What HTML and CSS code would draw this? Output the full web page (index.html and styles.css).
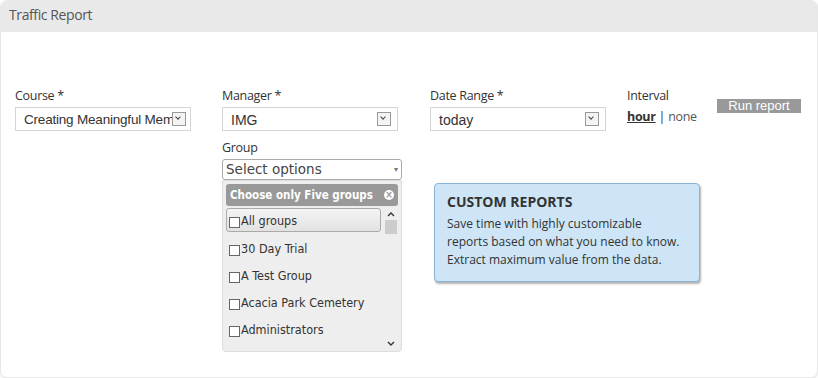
FILE: index.html
```html
<!DOCTYPE html>
<html lang="en">
<head>
    <meta charset="UTF-8">
    <title>Traffic Report</title>
    <link rel="stylesheet" href="styles.css">
</head>
<body>
    <div class="panel">
        <div class="panel-head">Traffic Report</div>
        <div class="filters">
            <div class="col col-course">
                <label class="lbl">Course *</label>
                <div class="sel sel-course"><span class="sel-text">Creating Meaningful Memories</span><span class="arrow"></span></div>
            </div>

            <div class="col col-manager">
                <label class="lbl">Manager *</label>
                <div class="sel"><span class="sel-text">IMG</span><span class="arrow"></span></div>
                <label class="lbl lbl-group">Group</label>
                <div class="ms-button">Select options<span class="ms-caret">&#9662;</span></div>
                <div class="ms-menu">
                    <div class="ms-head">Choose only Five groups<span class="ms-close">&#215;</span></div>
                    <div class="ms-list">
                        <ul class="ms-items">
                            <li class="hover"><span class="cb"></span>All groups</li>
                            <li><span class="cb"></span>30 Day Trial</li>
                            <li><span class="cb"></span>A Test Group</li>
                            <li><span class="cb"></span>Acacia Park Cemetery</li>
                            <li><span class="cb"></span>Administrators</li>
                        </ul>
                        <div class="scroll">
                            <svg class="sc-up" width="8" height="6" viewBox="0 0 8 6"><path d="M1 5 L4 2 L7 5" fill="none" stroke="#333" stroke-width="1.4"/></svg>
                            <span class="sc-thumb"></span>
                            <svg class="sc-down" width="8" height="6" viewBox="0 0 8 6"><path d="M1 1 L4 4 L7 1" fill="none" stroke="#333" stroke-width="1.4"/></svg>
                        </div>
                    </div>
                </div>
            </div>

            <div class="col col-date">
                <label class="lbl">Date Range *</label>
                <div class="sel"><span class="sel-text">today</span><span class="arrow"></span></div>
                <div class="promo">
                    <h3>CUSTOM REPORTS</h3>
                    <p>Save time with highly customizable<br>reports based on what you need to know.<br>Extract maximum value from the data.</p>
                </div>
            </div>

            <div class="col col-interval">
                <label class="lbl">Interval</label>
                <div class="interval"><a class="on">hour</a> | <a>none</a></div>
            </div>

            <div class="col col-run">
                <button class="btn-run">Run report</button>
            </div>
        </div>
    </div>
</body>
</html>
```

FILE: styles.css
```css
body {
    margin: 0;
    background: #fff;
    font-family: "Liberation Sans", Arial, sans-serif;
    color: #333;
}

.panel {
    height: 376px;
    border: 1px solid #e8e8e8;
    border-radius: 7px;
    box-shadow: 0 1px 2px rgba(0, 0, 0, 0.1);
    overflow: hidden;
    background: #fff;
}

.panel-head {
    height: 31px;
    line-height: 28px;
    background: #e9e9e9;
    padding-left: 8px;
    font-family: "Open Sans", sans-serif;
    font-size: 14px;
    color: #555;
    letter-spacing: -0.4px;
}

.filters {
    display: flex;
    padding: 55px 0 0 14px;
}

.col {
    display: flex;
    flex-direction: column;
    align-items: flex-start;
}

.col-course { width: 207px; }
.col-manager { width: 208px; }
.col-date { width: 197px; }
.col-interval { width: 90px; }

.lbl {
    font-family: "Open Sans", sans-serif;
    font-size: 12.5px;
    letter-spacing: -0.3px;
    color: #333;
    height: 20px;
    line-height: 17px;
}

.sel {
    display: flex;
    align-items: center;
    padding-left: 8px;
    box-sizing: border-box;
    width: 176px;
    height: 24px;
    border: 1px solid #d5d5d5;
    font-size: 14px;
    color: #333;
}

.sel-text {
    flex: 1;
    white-space: nowrap;
    overflow: hidden;
    padding-top: 1px;
}

.sel-course .sel-text {
    flex: 0 0 148px;
    font-size: 13.5px;
    letter-spacing: -0.2px;
}

.arrow {
    width: 12px;
    height: 12px;
    border: 1px solid #999;
    margin-right: 6px;
    background: #f4f4f4;
    position: relative;
}

.sel-course .arrow {
    margin-right: 0;
}

.arrow::after {
    content: "";
    position: absolute;
    left: 3px;
    top: 2px;
    width: 3px;
    height: 3px;
    border-right: 1.5px solid #444;
    border-bottom: 1.5px solid #444;
    transform: rotate(45deg);
}

.lbl-group {
    margin-top: 8px;
}

.ms-button {
    width: 180px;
    height: 21px;
    box-sizing: border-box;
    border: 1px solid #aaa;
    border-radius: 3px;
    padding-left: 3px;
    font-family: "DejaVu Sans", sans-serif;
    font-size: 13.5px;
    line-height: 19px;
    color: #444;
    position: relative;
}

.ms-caret {
    position: absolute;
    right: 3px;
    top: 0;
    font-size: 8px;
    color: #777;
}

.ms-menu {
    width: 180px;
    height: 172px;
    box-sizing: border-box;
    background: #eee;
    border: 1px solid #ddd;
    border-radius: 0 0 4px 4px;
    padding: 3px;
    font-family: "DejaVu Sans Condensed", "DejaVu Sans", sans-serif;
}

.ms-head {
    height: 22px;
    background: #999;
    border-radius: 3px;
    color: #fff;
    font-weight: bold;
    font-size: 11.5px;
    line-height: 22px;
    padding-left: 4px;
    position: relative;
}

.ms-close {
    position: absolute;
    right: 4px;
    top: 6px;
    width: 10px;
    height: 10px;
    border-radius: 50%;
    background: #fff;
    color: #999;
    font-size: 10px;
    line-height: 10px;
    text-align: center;
}

.ms-list {
    display: flex;
    margin-top: 2px;
}

.ms-items {
    list-style: none;
    margin: 0;
    padding: 0;
    width: 157px;
}

.ms-items li {
    height: 27px;
    display: flex;
    align-items: center;
    font-size: 12.5px;
    color: #333;
    padding-left: 3px;
    box-sizing: border-box;
}

.ms-items li.hover {
    height: 24px;
    border: 1px solid #aaa;
    border-radius: 3px;
    background: linear-gradient(#f4f4f4, #e2e2e2);
    margin-bottom: 3px;
    padding-left: 2px;
}

.cb {
    width: 9px;
    height: 9px;
    border: 1px solid #666;
    background: #fff;
    margin-right: 1px;
    margin-top: 4px;
}

.scroll {
    width: 15px;
    margin-left: 2px;
    height: 140px;
    display: flex;
    flex-direction: column;
    align-items: center;
}

.sc-up {
    margin-top: 3px;
}

.sc-down {
    margin-top: auto;
    margin-bottom: 1px;
}

.sc-thumb {
    width: 12px;
    height: 14px;
    background: #ccc;
    margin-top: 3px;
}

.promo {
    margin: 52px 0 0 4px;
    width: 266px;
    height: 99px;
    box-sizing: border-box;
    background: #cde5f6;
    border: 1px solid #88b4d8;
    border-radius: 4px;
    box-shadow: 1px 2px 2px rgba(0, 0, 0, 0.3);
    padding: 8px 12px;
    font-family: "Open Sans", sans-serif;
}

.promo h3 {
    margin: 0 0 4px;
    font-size: 14px;
    font-weight: bold;
    color: #333;
}

.promo p {
    margin: 0;
    font-size: 12px;
    line-height: 18px;
    color: #333;
    white-space: nowrap;
}

.interval {
    font-family: "Open Sans", sans-serif;
    font-size: 12.5px;
    color: #333;
    letter-spacing: -0.3px;
    margin-top: 1px;
}

.interval a {
    color: #555;
}

.interval a.on {
    font-weight: bold;
    text-decoration: underline;
    color: #333;
}

.col-run {
    padding-top: 12px;
}

.btn-run {
    width: 84px;
    height: 14px;
    border: none;
    background: #999;
    color: #fff;
    font-family: "Liberation Sans", Arial, sans-serif;
    font-size: 13px;
    line-height: 14px;
    padding: 0;
}
```
